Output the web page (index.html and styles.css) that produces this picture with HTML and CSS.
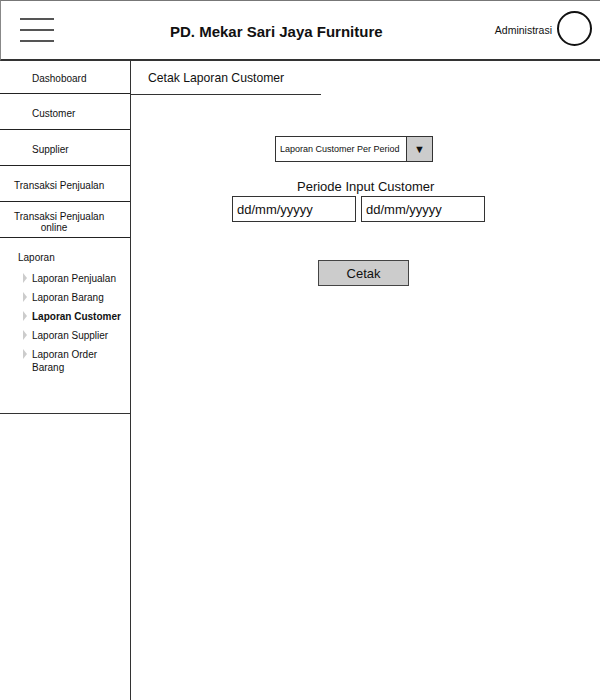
FILE: index.html
```html
<!DOCTYPE html>
<html>
<head>
<meta charset="utf-8">
<link rel="stylesheet" href="styles.css">
</head>
<body>
<div class="page">
  <header class="topbar">
    <div class="burger"><span></span><span></span><span></span></div>
    <h1 class="title">PD. Mekar Sari Jaya Furniture</h1>
    <div class="user"><span class="user-name">Administrasi</span><span class="avatar"></span></div>
  </header>
  <div class="main">
    <nav class="sidebar">
      <div class="menu">
        <div class="item item-first">Dashoboard</div>
        <div class="item">Customer</div>
        <div class="item">Supplier</div>
        <div class="item item-wide">Transaksi Penjualan</div>
        <div class="item item-two">Transaksi Penjualan<br><span class="center-line">online</span></div>
        <div class="tree">
          <div class="tree-root">Laporan</div>
          <div class="leaf"><span class="arrow"></span><span>Laporan Penjualan</span></div>
          <div class="leaf"><span class="arrow"></span><span>Laporan Barang</span></div>
          <div class="leaf leaf-active"><span class="arrow"></span><span>Laporan Customer</span></div>
          <div class="leaf"><span class="arrow"></span><span>Laporan Supplier</span></div>
          <div class="leaf"><span class="arrow"></span><span>Laporan Order<br>Barang</span></div>
        </div>
      </div>
    </nav>
    <section class="content">
      <div class="page-title">Cetak Laporan Customer</div>
      <div class="select">
        <span class="select-text">Laporan Customer Per Period</span>
        <span class="select-btn">&#9660;</span>
      </div>
      <div class="period-label">Periode Input Customer</div>
      <div class="inputs">
        <div class="input">dd/mm/yyyyy</div>
        <div class="input">dd/mm/yyyyy</div>
      </div>
      <div class="button">Cetak</div>
    </section>
  </div>
</div>
</body>
</html>
```

FILE: styles.css
```css
* { box-sizing: border-box; }
html, body { margin: 0; padding: 0; background: #fff; }
body {
  font-family: "Liberation Sans", Arial, sans-serif;
  color: #111;
  width: 600px;
  height: 700px;
  overflow: hidden;
}
.page { width: 600px; height: 700px; display: flex; flex-direction: column; }

.topbar {
  height: 61px;
  display: flex;
  align-items: center;
  border-top: 1px solid #777;
  border-left: 1px solid #888;
  border-bottom: 2px solid #333;
}
.burger {
  width: 34px;
  margin-left: 19px;
  display: flex;
  flex-direction: column;
  gap: 9px;
}
.burger span { display: block; height: 2px; background: #555; }
.title {
  margin: 0 0 0 116px;
  font-size: 15px;
  font-weight: bold;
  padding-top: 2px;
}
.user { margin-left: auto; display: flex; align-items: center; margin-right: 8px; }
.user-name { font-size: 10.5px; margin-right: 5px; }
.avatar {
  width: 35px; height: 35px; border-radius: 50%;
  border: 2px solid #111;
  margin-top: -3px;
}

.main { flex: 1; display: flex; }
.sidebar {
  width: 131px;
  border-right: 1.5px solid #333;
  margin-top: -1px;
}
.menu { border-bottom: 1.5px solid #333; }
.item {
  height: 36px;
  border-bottom: 1.5px solid #222;
  font-size: 10px;
  display: flex;
  align-items: center;
  padding-left: 32px;
  padding-top: 4px;
}
.item-first { height: 34px; }
.item-wide { padding-left: 14px; }
.item-two {
  display: block;
  padding-left: 14px;
  padding-top: 9px;
  line-height: 11px;
}
.center-line { display: inline-block; width: 80px; text-align: center; }
.tree { height: 175px; padding-top: 14px; font-size: 10px; }
.tree-root { padding-left: 18px; margin-bottom: 9px; }
.leaf {
  display: flex;
  padding-left: 23px;
  line-height: 13px;
  margin-bottom: 6px;
}
.leaf-active { font-weight: bold; }
.arrow {
  width: 0; height: 0;
  border-top: 5px solid transparent;
  border-bottom: 5px solid transparent;
  border-left: 4px solid #ccc;
  margin-right: 5px;
  margin-top: 1px;
}

.content { flex: 1; display: flex; flex-direction: column; align-items: flex-start; }
.page-title {
  width: 190px;
  height: 35px;
  border-bottom: 1.5px solid #333;
  font-size: 12.2px;
  padding-left: 17px;
  padding-top: 11px;
  margin-top: -1px;
}
.select {
  margin: 41px 0 0 144px;
  width: 158px;
  height: 26px;
  border: 1px solid #333;
  display: flex;
}
.select-text { flex: 1; font-size: 9px; display: flex; align-items: center; padding-left: 4px; }
.select-btn {
  width: 26px;
  background: #ccc;
  border-left: 1px solid #333;
  font-size: 11px;
  display: flex; align-items: center; justify-content: center;
}
.period-label {
  margin: 17px 0 0 166px;
  font-size: 13px;
  line-height: 15px;
}
.inputs { display: flex; gap: 5px; margin: 2px 0 0 101px; }
.input {
  width: 124px; height: 26px;
  border: 1px solid #333;
  font-size: 13px;
  display: flex; align-items: center; padding-left: 4px;
}
.button {
  margin: 38px 0 0 187px;
  width: 91px; height: 26px;
  background: #ccc;
  border: 1.5px solid #444;
  font-size: 13px;
  display: flex; align-items: center; justify-content: center;
}
```
